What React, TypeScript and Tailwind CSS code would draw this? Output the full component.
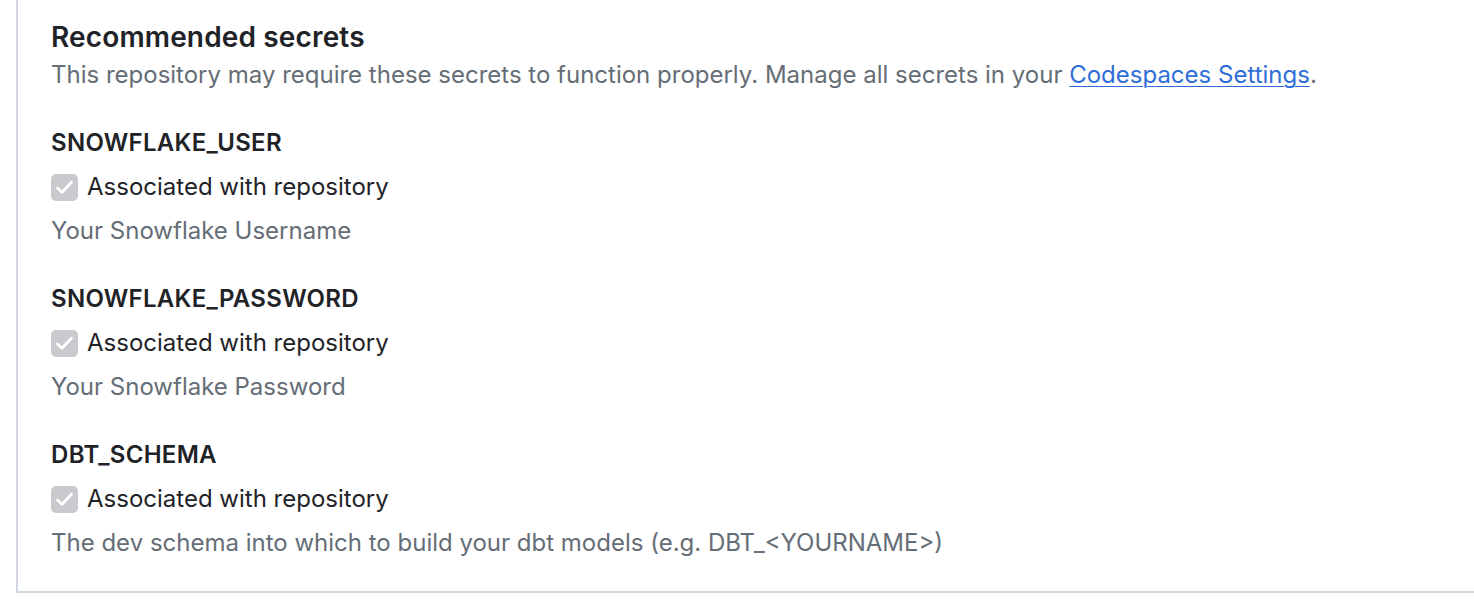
import React from "react";

const secrets = [
  { name: "SNOWFLAKE_USER", desc: "Your Snowflake Username" },
  { name: "SNOWFLAKE_PASSWORD", desc: "Your Snowflake Password" },
  { name: "DBT_SCHEMA", desc: "The dev schema into which to build your dbt models (e.g. DBT_<YOURNAME>)" },
];

function Check() {
  return (
    <span className="flex h-[27px] w-[27px] shrink-0 items-center justify-center rounded-[5px] bg-[#c9c9ce]">
      <svg width="27" height="27" viewBox="0 0 27 27" fill="none">
        <path d="M6.5 14 L11 18.3 L20.5 8.3" stroke="white" strokeWidth="2.8" strokeLinecap="round" strokeLinejoin="round" />
      </svg>
    </span>
  );
}

export default function App() {
  return (
    <div className="h-[614px] w-[1474px] bg-white" style={{ fontFamily: "Inter, 'Noto Sans', sans-serif" }}>
      <div className="ml-[16px] border-b-2 border-l-2 border-[#d0d7de] pl-[33px] pt-[21px] pb-[32px]">
        <h2 className="text-[28px] leading-[32px] font-semibold tracking-[0.15px] text-[#1f2328]">Recommended secrets</h2>
        <p className="mt-[6px] text-[24px] leading-[32px] text-[#656d76]">
          This repository may require these secrets to function properly. Manage all secrets in your{" "}
          <a className="text-[#2f6ed8] underline underline-offset-[3px] decoration-1">Codespaces Settings</a>.
        </p>
        <div className="mt-[36px] flex flex-col gap-[36px]">
          {secrets.map((s) => (
            <div key={s.name} className="flex flex-col gap-[12px]">
              <div className="text-[24px] leading-[32px] font-semibold tracking-[0.3px] text-[#1f2328]">{s.name}</div>
              <label className="flex h-[32px] items-center gap-[9px] text-[24px] text-[#1f2328]">
                <Check />
                <span>Associated with repository</span>
              </label>
              <div className="text-[24px] leading-[32px] text-[#656d76]">{s.desc}</div>
            </div>
          ))}
        </div>
      </div>
    </div>
  );
}
